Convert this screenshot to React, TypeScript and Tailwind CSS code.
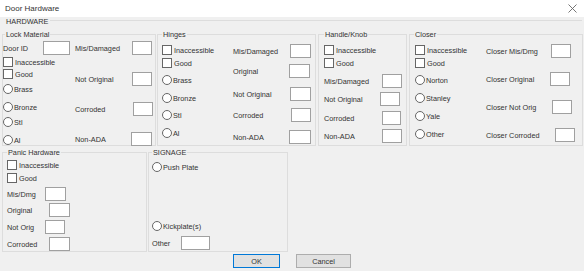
import React from "react";

const txt = "text-[7.3px] leading-[9px] text-[#333333] whitespace-nowrap";

function Check({ label, className = "" }: { label: string; className?: string }) {
  return (
    <div className={`flex h-[10px] items-center gap-[2px] ${className}`}>
      <div className="h-[10px] w-[10px] shrink-0 border border-[#666666] bg-white" />
      <span className={txt}>{label}</span>
    </div>
  );
}

function Radio({ label, className = "" }: { label: string; className?: string }) {
  return (
    <div className={`flex h-[10px] items-center gap-[1px] ${className}`}>
      <div className="h-[10px] w-[10px] shrink-0 rounded-full border border-[#666666] bg-white" />
      <span className={txt}>{label}</span>
    </div>
  );
}

function Field({
  label,
  labelW,
  boxW,
  className = "",
}: {
  label: string;
  labelW: string;
  boxW: string;
  className?: string;
}) {
  return (
    <div className={`flex h-[14px] items-center ${className}`}>
      <span className={`${txt} ${labelW}`}>{label}</span>
      <div className={`h-[14px] shrink-0 border border-[#a0a0a0] bg-white ${boxW}`} />
    </div>
  );
}

function Group({
  title,
  titleLeft,
  className,
  children,
}: {
  title: string;
  titleLeft: string;
  className: string;
  children: React.ReactNode;
}) {
  return (
    <div className={`relative border border-[#dddddd] ${className}`}>
      <span className={`absolute -top-[5px] bg-[#f0f0f0] px-[1px] ${titleLeft} ${txt}`}>{title}</span>
      {children}
    </div>
  );
}

export default function App() {
  return (
    <div className="flex h-[271px] w-[584px] flex-col overflow-hidden bg-[#f0f0f0] font-['Liberation_Sans',Arial,sans-serif]">
      {/* title bar */}
      <div className="flex h-[17px] shrink-0 items-center justify-between bg-white pl-[5px] pr-[7px]">
        <span className="text-[8px] leading-[10px] text-[#333333]">Door Hardware</span>
        <svg width="9" height="9" viewBox="0 0 9 9">
          <path d="M0.5 0.5 L8.5 8.5 M8.5 0.5 L0.5 8.5" stroke="#666" strokeWidth="0.9" />
        </svg>
      </div>

      {/* HARDWARE header */}
      <div className="flex h-[11px] items-start pl-[6px] pr-[2px]">
        <span className={txt}>HARDWARE</span>
        <div className="ml-[2px] mt-[3px] flex-1 border-t border-[#dddddd]" />
      </div>

      {/* hardware groups */}
      <div className="mt-[6px] flex h-[112px]">
        <Group title="Lock Material" titleLeft="left-[2px]" className="ml-[2px] w-[154px]">
          <div className="flex">
            <div className="flex w-[72px] flex-col pt-[6px]">
              <Field label="Door ID" labelW="w-[40px]" boxW="w-[27px]" />
              <Check label="Inaccessible" className="mt-[2px]" />
              <Check label="Good" className="mt-[2px]" />
              <Radio label="Brass" className="mt-[5px]" />
              <Radio label="Bronze" className="mt-[8px]" />
              <Radio label="Stl" className="mt-[5px]" />
              <Radio label="Al" className="mt-[8px]" />
            </div>
            <div className="flex flex-col pt-[6px]">
              <Field label="Mis/Damaged" labelW="w-[57px]" boxW="w-[20px]" />
              <Field label="Not Original" labelW="w-[57px]" boxW="w-[20px]" className="mt-[17px]" />
              <Field label="Corroded" labelW="w-[58px]" boxW="w-[20px]" className="mt-[16px]" />
              <Field label="Non-ADA" labelW="w-[56px]" boxW="w-[21px]" className="mt-[16px]" />
            </div>
          </div>
        </Group>

        <Group title="Hinges" titleLeft="left-[4px]" className="ml-[1px] w-[159px]">
          <div className="flex pl-[4px]">
            <div className="flex w-[71px] flex-col pt-[10px]">
              <Check label="Inaccessible" />
              <Check label="Good" className="mt-[3px]" />
              <Radio label="Brass" className="mt-[7px]" />
              <Radio label="Bronze" className="mt-[8px]" />
              <Radio label="Stl" className="mt-[7px]" />
              <Radio label="Al" className="mt-[8px]" />
            </div>
            <div className="flex flex-col pt-[9px]">
              <Field label="Mis/Damaged" labelW="w-[57px]" boxW="w-[21px]" />
              <Field label="Original" labelW="w-[56px]" boxW="w-[21px]" className="mt-[6px]" />
              <Field label="Not Original" labelW="w-[57px]" boxW="w-[21px]" className="mt-[9px]" />
              <Field label="Corroded" labelW="w-[58px]" boxW="w-[20px]" className="mt-[7px]" />
              <Field label="Non-ADA" labelW="w-[56px]" boxW="w-[22px]" className="mt-[8px]" />
            </div>
          </div>
        </Group>

        <Group title="Handle/Knob" titleLeft="left-[5px]" className="ml-[2px] w-[89px]">
          <div className="flex flex-col pl-[5px] pt-[10px]">
            <Check label="Inaccessible" />
            <Check label="Good" className="mt-[3px]" />
            <Field label="Mis/Damaged" labelW="w-[58px]" boxW="w-[20px]" className="mt-[6px]" />
            <Field label="Not Original" labelW="w-[56px]" boxW="w-[20px]" className="mt-[4px]" />
            <Field label="Corroded" labelW="w-[58px]" boxW="w-[19px]" className="mt-[5px]" />
            <Field label="Non-ADA" labelW="w-[58px]" boxW="w-[20px]" className="mt-[4px]" />
          </div>
        </Group>

        <Group title="Closer" titleLeft="left-[4px]" className="ml-[2px] w-[174px]">
          <div className="flex pl-[5px]">
            <div className="flex w-[71px] flex-col pt-[10px]">
              <Check label="Inaccessible" />
              <Check label="Good" className="mt-[3px]" />
              <Radio label="Norton" className="mt-[7px]" />
              <Radio label="Stanley" className="mt-[8px]" />
              <Radio label="Yale" className="mt-[8px]" />
              <Radio label="Other" className="mt-[8px]" />
            </div>
            <div className="flex flex-col pt-[9px]">
              <Field label="Closer Mis/Dmg" labelW="w-[65px]" boxW="w-[20px]" />
              <Field label="Closer Original" labelW="w-[64px]" boxW="w-[20px]" className="mt-[14px]" />
              <Field label="Closer Not Orig" labelW="w-[66px]" boxW="w-[20px]" className="mt-[14px]" />
              <Field label="Closer Corroded" labelW="w-[69px]" boxW="w-[20px]" className="mt-[14px]" />
            </div>
          </div>
        </Group>
      </div>

      {/* lower groups */}
      <div className="mt-[6px] flex h-[100px]">
        <Group title="Panic Hardware" titleLeft="left-[4px]" className="ml-[2px] w-[145px]">
          <div className="flex flex-col pl-[4px] pt-[7px]">
            <Check label="Inaccessible" />
            <Check label="Good" className="mt-[3px]" />
            <Field label="Mis/Dmg" labelW="w-[38px]" boxW="w-[21px]" className="mt-[4px]" />
            <Field label="Original" labelW="w-[42px]" boxW="w-[21px]" className="mt-[2px]" />
            <Field label="Not Orig" labelW="w-[38px]" boxW="w-[20px]" className="mt-[3px]" />
            <Field label="Corroded" labelW="w-[42px]" boxW="w-[21px]" className="mt-[3px]" />
          </div>
        </Group>

        <Group title="SIGNAGE" titleLeft="left-[3px]" className="ml-[1px] w-[140px]">
          <div className="flex flex-col pl-[3px] pt-[9px]">
            <Radio label="Push Plate" />
            <Radio label="Kickplate(s)" className="mt-[49px]" />
            <Field label="Other" labelW="w-[29px]" boxW="w-[29px]" className="mt-[5px]" />
          </div>
        </Group>
      </div>

      {/* buttons */}
      <div className="mt-[2px] flex justify-center gap-[16px]">
        <button className="flex h-[14px] w-[47px] items-center justify-center border border-[#0078d7] bg-[#e1e1e1]">
          <span className={txt}>OK</span>
        </button>
        <button className="flex h-[14px] w-[55px] items-center justify-center border border-[#adadad] bg-[#e1e1e1]">
          <span className={txt}>Cancel</span>
        </button>
      </div>
    </div>
  );
}
